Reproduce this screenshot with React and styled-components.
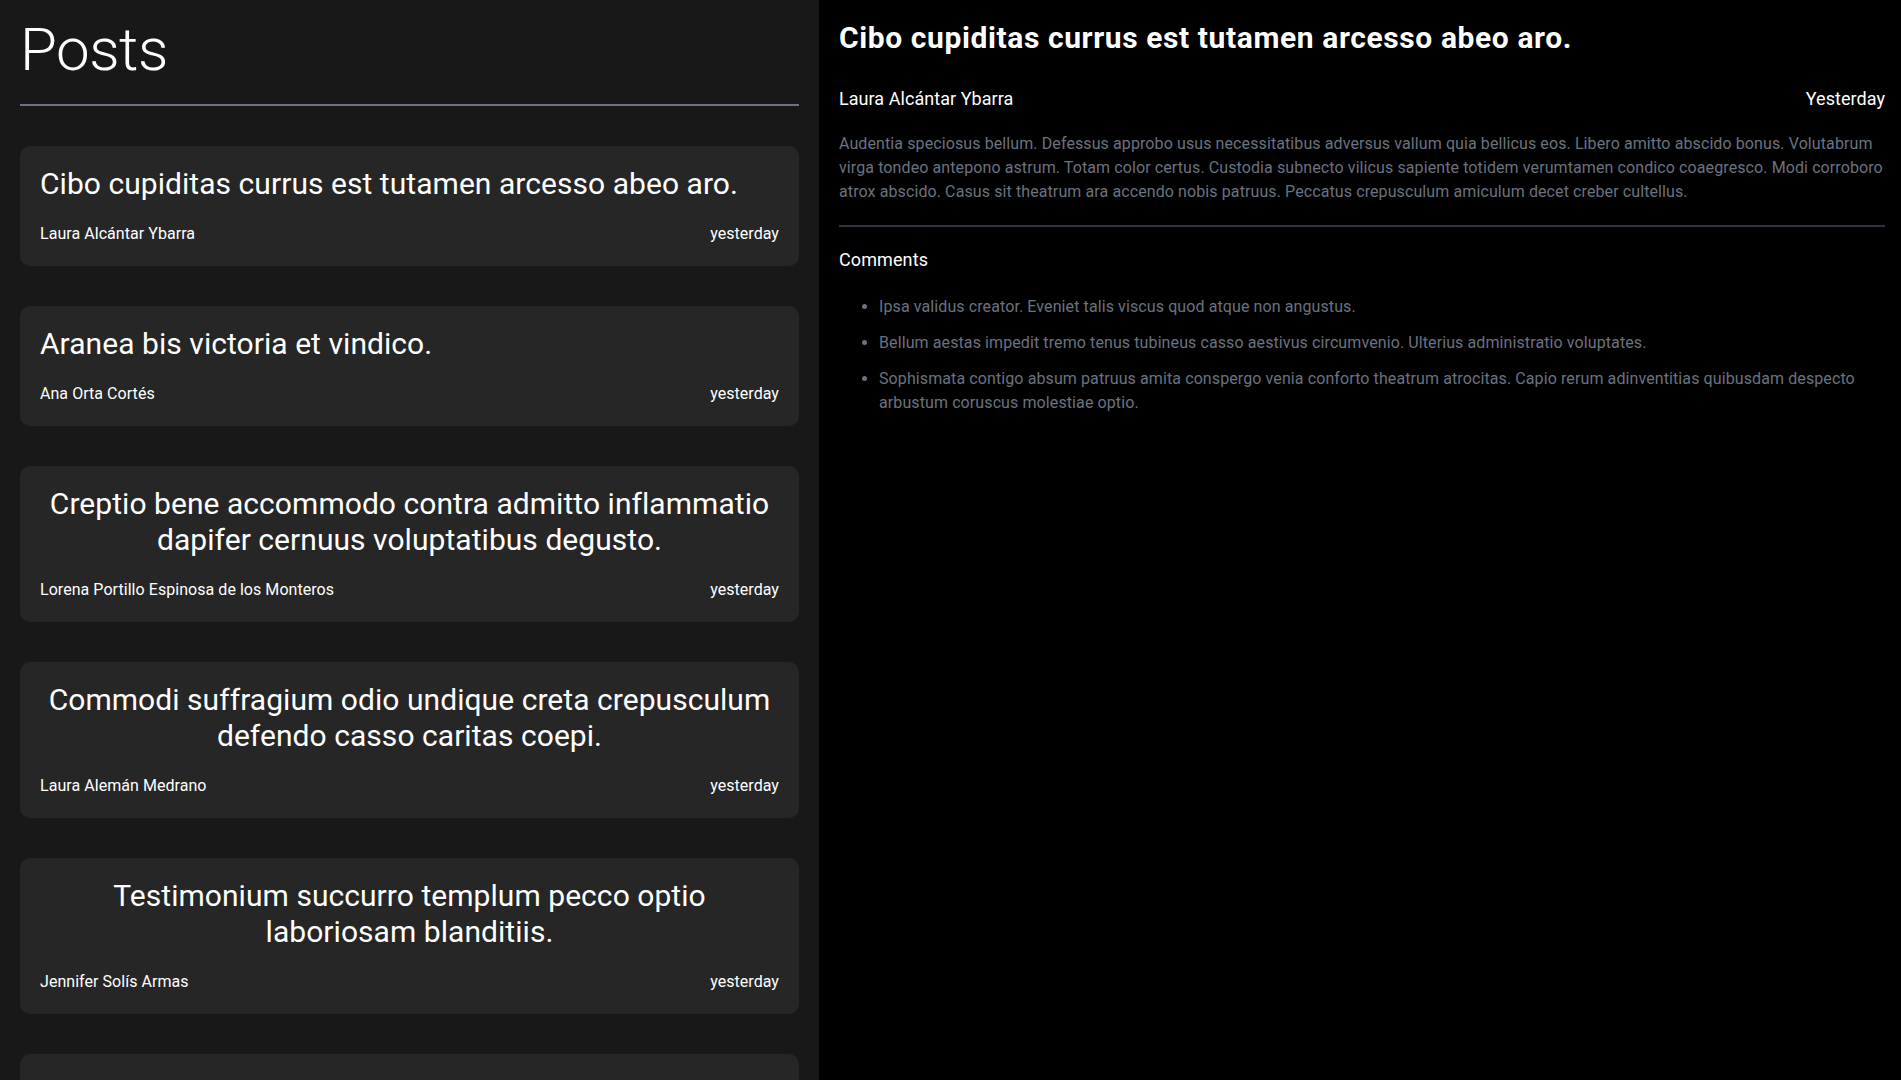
import React from "react";
import styled, { createGlobalStyle } from "styled-components";

const GlobalStyle = createGlobalStyle`
  html, body {
    margin: 0;
    padding: 0;
    height: 100%;
    background: #000000;
  }
  body {
    font-family: Roboto, "Open Sans", "Liberation Sans", sans-serif;
    color: #ffffff;
    overflow: hidden;
  }
  * { box-sizing: border-box; }
`;

const Layout = styled.div`
  display: flex;
  height: 100vh;
  width: 100%;
`;

const Sidebar = styled.aside`
  flex: 0 0 819px;
  width: 819px;
  height: 100vh;
  background: #181818;
  padding: 20px;
  overflow-y: auto;
  scrollbar-width: none;
  &::-webkit-scrollbar { display: none; }
`;

const PageTitle = styled.h1`
  margin: 0;
  font-size: 60px;
  line-height: 60px;
  font-weight: 300;
  letter-spacing: -0.5px;
`;

const Rule = styled.hr`
  margin: ${(p) => p.$margin || "0"};
  border: none;
  height: 2px;
  background: ${(p) => p.$color};
`;

const PostList = styled.ul`
  list-style: none;
  margin: 0;
  padding: 0;
  display: flex;
  flex-direction: column;
  gap: 40px;
`;

const Card = styled.li`
  display: flex;
  flex-direction: column;
  align-items: flex-start;
  gap: 20px;
  background: #262626;
  border-radius: 10px;
  padding: 20px;
  cursor: pointer;
`;

const CardTitle = styled.h2`
  margin: 0;
  font-size: 30px;
  line-height: 36px;
  font-weight: 400;
  text-align: center;
  letter-spacing: 0.05px;
`;

const Meta = styled.div`
  align-self: stretch;
  display: flex;
  justify-content: space-between;
  align-items: center;
  font-size: ${(p) => (p.$large ? "18px" : "16px")};
  line-height: ${(p) => (p.$large ? "28px" : "24px")};
  letter-spacing: 0.05px;
  margin: ${(p) => p.$margin || "0"};
`;

const Detail = styled.main`
  flex: 1;
  height: 100vh;
  background: #000000;
  padding: 20px 16px 20px 20px;
  overflow: hidden;
`;

const DetailTitle = styled.h1`
  margin: 0;
  font-size: 30px;
  line-height: 36px;
  font-weight: 700;
  letter-spacing: 0.6px;
`;

const Body = styled.p`
  margin: 19px 0 0;
  font-size: 16px;
  line-height: 24px;
  color: #6b7280;
  letter-spacing: 0.1px;
`;

const SectionTitle = styled.h3`
  margin: 19px 0 0;
  font-size: 18px;
  line-height: 28px;
  font-weight: 400;
  letter-spacing: 0.1px;
`;

const CommentList = styled.ul`
  margin: 21px 0 0;
  padding: 0 0 0 40px;
  display: flex;
  flex-direction: column;
  gap: 12px;
`;

const Comment = styled.li`
  font-size: 16px;
  line-height: 24px;
  color: #6b7280;
  letter-spacing: 0.1px;
`;

const posts = [
  { title: "Cibo cupiditas currus est tutamen arcesso abeo aro.", author: "Laura Alcántar Ybarra" },
  { title: "Aranea bis victoria et vindico.", author: "Ana Orta Cortés" },
  { title: "Creptio bene accommodo contra admitto inflammatio dapifer cernuus voluptatibus degusto.", author: "Lorena Portillo Espinosa de los Monteros" },
  { title: "Commodi suffragium odio undique creta crepusculum defendo casso caritas coepi.", author: "Laura Alemán Medrano" },
  { title: "Testimonium succurro templum pecco optio laboriosam blanditiis.", author: "Jennifer Solís Armas" },
  { title: "Vomica tabella vitiosus vulgo sollicito ratione tredecim suscipio aiunt.", author: "Rafael Montenegro Quiroz" },
  { title: "Cura conturbo velut absque.", author: "Pedro Salinas Ochoa" },
];

const comments = [
  "Ipsa validus creator. Eveniet talis viscus quod atque non angustus.",
  "Bellum aestas impedit tremo tenus tubineus casso aestivus circumvenio. Ulterius administratio voluptates.",
  "Sophismata contigo absum patruus amita conspergo venia conforto theatrum atrocitas. Capio rerum adinventitias quibusdam despecto arbustum coruscus molestiae optio.",
];

export default function App() {
  return (
    <>
      <GlobalStyle />
      <Layout>
        <Sidebar>
          <PageTitle>Posts</PageTitle>
          <Rule $color="#6b7280" $margin="24px 0 40px" />
          <PostList>
            {posts.map((p) => (
              <Card key={p.title}>
                <CardTitle>{p.title}</CardTitle>
                <Meta>
                  <span>{p.author}</span>
                  <span>yesterday</span>
                </Meta>
              </Card>
            ))}
          </PostList>
        </Sidebar>
        <Detail>
          <DetailTitle>Cibo cupiditas currus est tutamen arcesso abeo aro.</DetailTitle>
          <Meta $large $margin="29px 0 0">
            <span>Laura Alcántar Ybarra</span>
            <span>Yesterday</span>
          </Meta>
          <Body>
            Audentia speciosus bellum. Defessus approbo usus necessitatibus adversus vallum quia bellicus eos. Libero amitto abscido bonus. Volutabrum virga tondeo antepono astrum. Totam color certus. Custodia subnecto vilicus sapiente totidem verumtamen condico coaegresco. Modi corroboro atrox abscido. Casus sit theatrum ara accendo nobis patruus. Peccatus crepusculum amiculum decet creber cultellus.
          </Body>
          <Rule $color="#2f3540" $margin="21px 0 0" />
          <SectionTitle>Comments</SectionTitle>
          <CommentList>
            {comments.map((c) => (
              <Comment key={c}>{c}</Comment>
            ))}
          </CommentList>
        </Detail>
      </Layout>
    </>
  );
}
